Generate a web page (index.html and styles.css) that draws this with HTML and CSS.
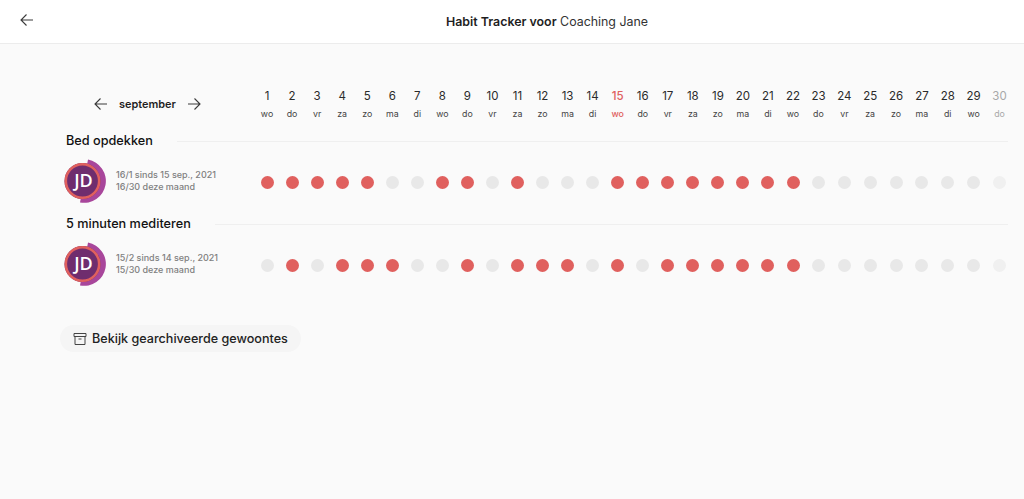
FILE: index.html
```html
<!DOCTYPE html>
<html lang="nl">
<head>
  <meta charset="UTF-8" />
  <title>Habit Tracker</title>
  <link rel="stylesheet" href="styles.css">
</head>
<body>
  <header class="topbar">
    <a class="back-link" href="#">
      <svg class="arrow" width="16" height="16" viewBox="0 0 16 16"><path d="M14 8H2.500M7.500 2.500 2 8l5.500 5.500"/></svg>
    </a>
    <h1 class="page-title"><strong>Habit Tracker voor</strong> Coaching Jane</h1>
  </header>

  <main class="content">
    <div class="calendar-head">
      <div class="month-nav">
        <svg class="arrow" width="16" height="16" viewBox="0 0 16 16"><path d="M14 8H2.500M7.500 2.500 2 8l5.500 5.500"/></svg>
        <span class="month-name">september</span>
        <svg class="arrow" width="16" height="16" viewBox="0 0 16 16"><path d="M2 8h11.500M8.500 2.500 14 8l-5.500 5.500"/></svg>
      </div>
      <div class="days">
        <div class="day">1<small>wo</small></div>
        <div class="day">2<small>do</small></div>
        <div class="day">3<small>vr</small></div>
        <div class="day">4<small>za</small></div>
        <div class="day">5<small>zo</small></div>
        <div class="day">6<small>ma</small></div>
        <div class="day">7<small>di</small></div>
        <div class="day">8<small>wo</small></div>
        <div class="day">9<small>do</small></div>
        <div class="day">10<small>vr</small></div>
        <div class="day">11<small>za</small></div>
        <div class="day">12<small>zo</small></div>
        <div class="day">13<small>ma</small></div>
        <div class="day">14<small>di</small></div>
        <div class="day today">15<small>wo</small></div>
        <div class="day">16<small>do</small></div>
        <div class="day">17<small>vr</small></div>
        <div class="day">18<small>za</small></div>
        <div class="day">19<small>zo</small></div>
        <div class="day">20<small>ma</small></div>
        <div class="day">21<small>di</small></div>
        <div class="day">22<small>wo</small></div>
        <div class="day">23<small>do</small></div>
        <div class="day">24<small>vr</small></div>
        <div class="day">25<small>za</small></div>
        <div class="day">26<small>zo</small></div>
        <div class="day">27<small>ma</small></div>
        <div class="day">28<small>di</small></div>
        <div class="day">29<small>wo</small></div>
        <div class="day faded">30<small>do</small></div>
      </div>
    </div>

    <section class="habit">
      <div class="habit-title"><h2>Bed opdekken</h2><span class="line"></span></div>
      <div class="habit-row">
        <div class="habit-info">
          <svg class="avatar" width="46" height="46" viewBox="0 0 46 46">
            <path class="avatar-arc" d="M24 1.500A21.700 21.700 0 1 1 16 44.500Z"/>
            <circle class="avatar-bg" cx="18.500" cy="23" r="18"/>
            <circle class="avatar-ring" cx="18.500" cy="23" r="16.700"/>
            <text class="avatar-text" x="19.500" y="29">JD</text>
          </svg>
          <div class="stats">
            <div>16/1 sinds 15 sep., 2021</div>
            <div>16/30 deze maand</div>
          </div>
        </div>
        <div class="days">
          <i class="dot on"></i><i class="dot on"></i><i class="dot on"></i><i class="dot on"></i><i class="dot on"></i>
          <i class="dot"></i><i class="dot"></i><i class="dot on"></i><i class="dot on"></i><i class="dot"></i>
          <i class="dot on"></i><i class="dot"></i><i class="dot"></i><i class="dot"></i><i class="dot on"></i>
          <i class="dot on"></i><i class="dot on"></i><i class="dot on"></i><i class="dot on"></i><i class="dot on"></i>
          <i class="dot on"></i><i class="dot on"></i><i class="dot"></i><i class="dot"></i><i class="dot"></i>
          <i class="dot"></i><i class="dot"></i><i class="dot"></i><i class="dot"></i><i class="dot light"></i>
        </div>
      </div>
    </section>

    <section class="habit">
      <div class="habit-title"><h2>5 minuten mediteren</h2><span class="line"></span></div>
      <div class="habit-row">
        <div class="habit-info">
          <svg class="avatar" width="46" height="46" viewBox="0 0 46 46">
            <path class="avatar-arc" d="M24 1.500A21.700 21.700 0 1 1 16 44.500Z"/>
            <circle class="avatar-bg" cx="18.500" cy="23" r="18"/>
            <circle class="avatar-ring" cx="18.500" cy="23" r="16.700"/>
            <text class="avatar-text" x="19.500" y="29">JD</text>
          </svg>
          <div class="stats">
            <div>15/2 sinds 14 sep., 2021</div>
            <div>15/30 deze maand</div>
          </div>
        </div>
        <div class="days">
          <i class="dot"></i><i class="dot on"></i><i class="dot"></i><i class="dot on"></i><i class="dot on"></i>
          <i class="dot on"></i><i class="dot"></i><i class="dot"></i><i class="dot on"></i><i class="dot"></i>
          <i class="dot on"></i><i class="dot on"></i><i class="dot on"></i><i class="dot"></i><i class="dot on"></i>
          <i class="dot"></i><i class="dot on"></i><i class="dot on"></i><i class="dot on"></i><i class="dot on"></i>
          <i class="dot on"></i><i class="dot on"></i><i class="dot"></i><i class="dot"></i><i class="dot"></i>
          <i class="dot"></i><i class="dot"></i><i class="dot"></i><i class="dot"></i><i class="dot light"></i>
        </div>
      </div>
    </section>

    <button class="archive-btn">
      <svg width="14" height="14" viewBox="0 0 14 14"><path d="M1 1.500h12v3H1zM2 4.500v8h10v-8M5.500 7h3"/></svg>
      Bekijk gearchiveerde gewoontes
    </button>
  </main>
</body>
</html>
```

FILE: styles.css
```css
* {
  box-sizing: border-box;
}

body {
  margin: 0;
  height: 499px;
  overflow: hidden;
  font-family: Inter, Arial, sans-serif;
  background: #fafafa;
  color: #1f1f1f;
}

.arrow {
  fill: none;
  stroke: #3a3a3a;
  stroke-width: 1.1;
}

.topbar {
  position: relative;
  display: flex;
  justify-content: center;
  align-items: center;
  height: 44px;
  padding-left: 70px;
  background: white;
  border-bottom: 1px solid #ececec;
}

.back-link {
  position: absolute;
  left: 19px;
  top: 12px;
  line-height: 0;
}

.page-title {
  margin: 0 0 1px;
  font-size: 12.400px;
  font-weight: 400;
  color: #333;
}

.page-title strong {
  font-weight: 600;
  color: #1f1f1f;
}

.content {
  padding: 40px 0 0 64px;
}

.calendar-head {
  display: flex;
  height: 44px;
}

.month-nav {
  display: flex;
  align-items: center;
  width: 190.500px;
  height: 40px;
  padding-left: 29px;
  gap: 10px;
}

.month-name {
  font-size: 10.900px;
  font-weight: 600;
}

.days {
  display: grid;
  grid-template-columns: repeat(22, 25.050px) repeat(8, 25.860px);
  justify-items: center;
  align-items: center;
}

.day {
  margin-bottom: 2px;
  font-size: 11.500px;
  line-height: 18px;
  text-align: center;
  color: #2a2a2a;
}

.day small {
  display: block;
  font-size: 8.800px;
  line-height: 18px;
  color: #444;
}

.day.today,
.day.today small {
  color: #e0605e;
  font-weight: 500;
}

.day.faded,
.day.faded small {
  color: #a8a8a8;
}

.habit-title {
  display: flex;
  align-items: center;
  gap: 24px;
  height: 26px;
  margin-right: 16px;
  padding-left: 2px;
}

.habit-title h2 {
  margin: 0 0 2px;
  font-size: 12.700px;
  font-weight: 500;
  color: #111;
}

.line {
  flex: 1;
  height: 1px;
  background: #efefef;
}

.habit-row {
  display: flex;
  align-items: center;
  height: 57px;
}

.habit-info {
  display: flex;
  align-items: center;
  width: 190.500px;
  margin-top: -4px;
  gap: 6px;
}

.avatar-arc {
  fill: #a8469b;
}

.avatar-bg {
  fill: #6f2d6e;
}

.avatar-ring {
  fill: none;
  stroke: #e0605e;
  stroke-width: 2.600;
}

.avatar-text {
  font-family: "Open Sans", sans-serif;
  font-size: 18px;
  font-weight: 600;
  fill: white;
  text-anchor: middle;
}

.stats {
  font-size: 9px;
  font-weight: 500;
  line-height: 12px;
  color: #808080;
  white-space: nowrap;
}

.dot {
  display: block;
  width: 13px;
  height: 13px;
  border-radius: 50%;
  background: #e8e8e8;
}

.dot.on {
  background: #e0605e;
}

.dot.light {
  background: #f0f0f0;
}

.archive-btn {
  display: flex;
  align-items: center;
  gap: 5px;
  height: 27px;
  margin: 31px 0 0 -4px;
  padding: 0 13px;
  border: none;
  border-radius: 14px;
  background: #f5f5f5;
  font-family: inherit;
  font-size: 12.600px;
  font-weight: 500;
  color: #222;
}

.archive-btn svg {
  fill: none;
  stroke: #444;
  stroke-width: 1;
}
```
